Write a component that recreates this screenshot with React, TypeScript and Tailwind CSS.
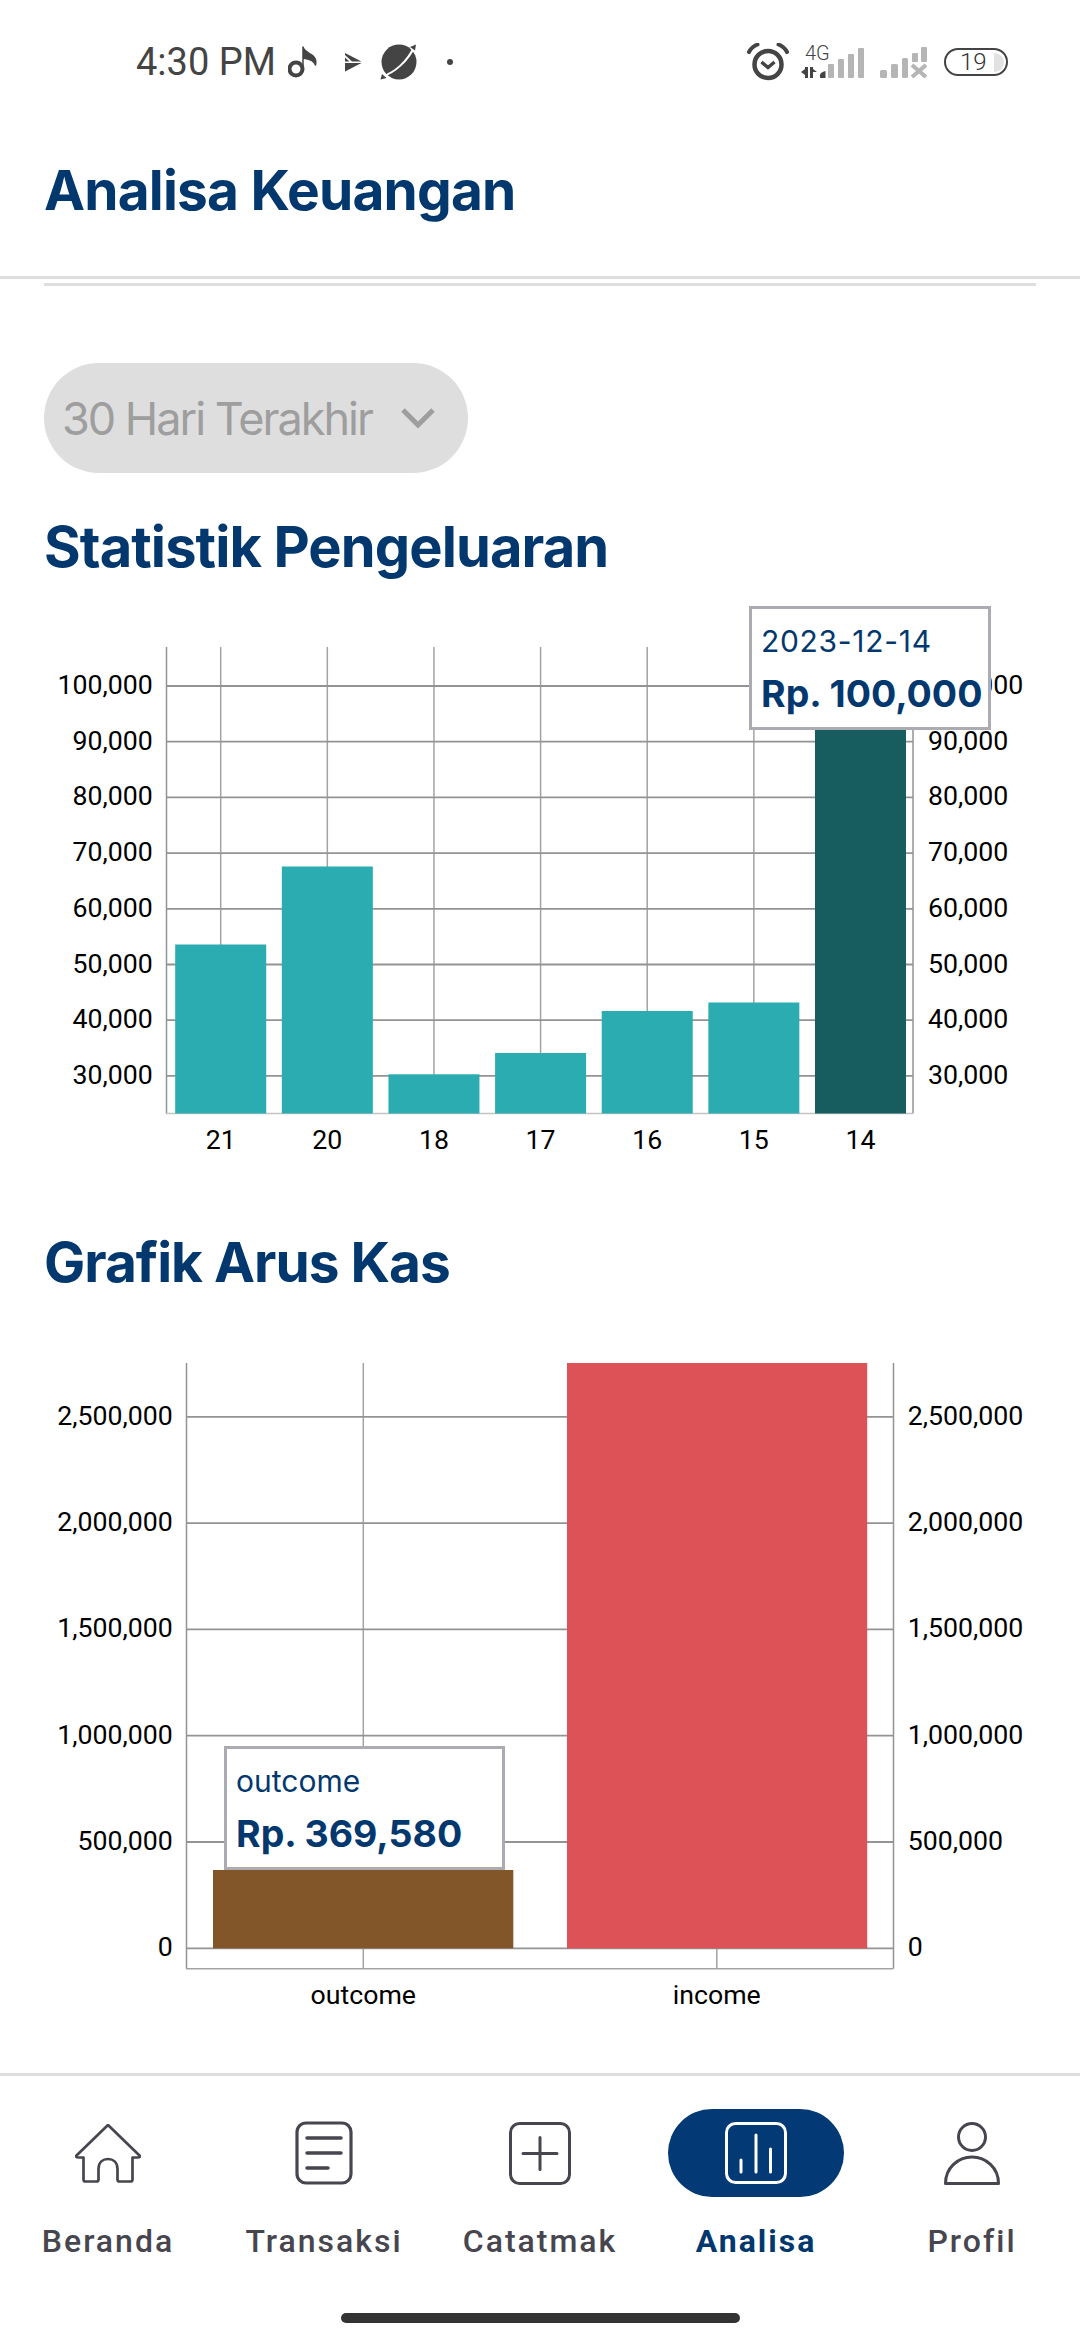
import React from "react";

const GRID = "#939393";

function MusicNote() {
  return (
    <svg width="30" height="33" viewBox="0 0 30 33" className="ml-[12px]">
      <circle cx="8" cy="23" r="6.500" fill="none" stroke="#444" strokeWidth="4" />
      <path d="M15 23 V1 C 16 5 20 6.500 23 8.500 C 27 11 28.500 14.500 27.500 19 C 26.500 15.500 22 13 15 12 Z" fill="#444" stroke="#444" strokeWidth="1.500" strokeLinejoin="round" />
    </svg>
  );
}

function PlayMark() {
  return (
    <svg width="18" height="20" viewBox="0 0 18 20" className="ml-[26px]">
      <path d="M1 1 L17.500 9.500 L8 9.500 L1 3 Z" fill="#444" />
      <path d="M1 5.500 L5.500 9.500 L1 9.500 Z" fill="#444" />
      <path d="M1 11 L8 11 L17.500 11 L1 19.500 Z" fill="#444" />
    </svg>
  );
}

function Planet() {
  return (
    <svg width="38" height="38" viewBox="0 0 38 38" className="ml-[18px]">
      <circle cx="19" cy="19" r="17.500" fill="#444" />
      <path d="M3 33 C 14 30, 28 18, 34 4" fill="none" stroke="#fff" strokeWidth="2" />
      <path d="M30 4 l6 -2.500 -1 6z M2 31 l-1.500 5.500 6 -1.500z" fill="#444" />
    </svg>
  );
}

function Alarm() {
  return (
    <svg width="42" height="38" viewBox="0 0 42 38">
      <circle cx="21" cy="21.500" r="13.500" fill="none" stroke="#444" strokeWidth="4.500" />
      <path d="M14.500 19 L21 24.500 L27.500 19" fill="none" stroke="#444" strokeWidth="3.500" />
      <path d="M2 9 C 4 5, 7 3, 10.500 1.500" fill="none" stroke="#444" strokeWidth="4" strokeLinecap="round" />
      <path d="M40 9 C 38 5, 35 3, 31.500 1.500" fill="none" stroke="#444" strokeWidth="4" strokeLinecap="round" />
    </svg>
  );
}

function Signal4G() {
  return (
    <svg width="68" height="34" viewBox="0 0 68 34" className="ml-[11px] overflow-visible">
      <text x="5" y="15" fontSize="20" fontWeight="300" fill="#444" className="font-['Roboto',sans-serif]">4G</text>
      <path d="M1 27 L5 24 V22 H8 V33 H5 V30Z M10 22 H13 V24 L17 27 L13 27 V33 H10Z" fill="#444" />
      <path d="M20 33 V30 C 20 28 22 27 25.500 26 V33Z" fill="#444" />
      <rect x="28" y="19" width="6" height="14" rx="1" fill="#b5b5b5" />
      <rect x="38" y="14" width="6" height="19" rx="1" fill="#b5b5b5" />
      <rect x="48" y="9" width="6" height="24" rx="1" fill="#b5b5b5" />
      <rect x="58" y="3" width="6" height="30" rx="1" fill="#b5b5b5" />
    </svg>
  );
}

function SignalX() {
  return (
    <svg width="50" height="32" viewBox="0 0 50 32" className="ml-[11px]">
      <rect x="1" y="24" width="7" height="8" rx="1.500" fill="#b5b5b5" />
      <rect x="12" y="18" width="7" height="14" rx="1.500" fill="#b5b5b5" />
      <rect x="23" y="12" width="6" height="20" rx="1.500" fill="#b5b5b5" />
      <rect x="33" y="7" width="6" height="9" rx="1" fill="#b5b5b5" />
      <rect x="42" y="1" width="6" height="15" rx="1" fill="#b5b5b5" />
      <path d="M33 19 L47 31 M47 19 L33 31" stroke="#b5b5b5" strokeWidth="4" />
    </svg>
  );
}

function Battery() {
  return (
    <div className="ml-[15px] flex h-[28px] w-[64px] items-center justify-between overflow-hidden rounded-full border-[2.500px] border-[#444] pl-[14px] pr-[2px]">
      <span className="font-['Roboto',sans-serif] text-[24px] leading-none font-light text-[#333]">19</span>
      <span className="h-[19px] w-[10px] rounded-r-full bg-[#e2e2e2]" />
    </div>
  );
}

function StatusBar() {
  return (
    <div className="flex h-[123px] items-start justify-between pt-[43px] pr-[72px] pl-[136px]">
      <div className="flex h-[38px] items-center">
        <span className="font-['Roboto',sans-serif] text-[38px] leading-none text-[#444]">4:30 PM</span>
        <MusicNote />
        <PlayMark />
        <Planet />
        <span className="ml-[29px] h-[6px] w-[6px] rounded-full bg-[#444]" />
      </div>
      <div className="flex h-[38px] items-center">
        <Alarm />
        <Signal4G />
        <SignalX />
        <Battery />
      </div>
    </div>
  );
}

function Chevron() {
  return (
    <svg width="36" height="22" viewBox="0 0 36 22">
      <path d="M3 3 L18 18 L33 3" fill="none" stroke="#9e9e9e" strokeWidth="5" />
    </svg>
  );
}

function Tooltip({ className, label, value, labelClass }: { className: string; label: string; value: string; labelClass?: string }) {
  return (
    <div className={`absolute h-[124px] border-[3px] border-[#abacb1] bg-white pt-[13px] pl-[9px] font-['Inter',sans-serif] ${className}`}>
      <div className={`text-[30px] leading-[38px] text-[#03386f] ${labelClass ?? ""}`}>{label}</div>
      <div className="mt-[12px] text-[37.500px] leading-[44px] font-bold whitespace-nowrap text-[#03386f]">{value}</div>
    </div>
  );
}

const tick = "font-['Roboto',sans-serif]";

function BarChart() {
  const bottom = 513.5;
  const ys = [100, 90, 80, 70, 60, 50, 40, 30];
  const labels = ["21", "20", "18", "17", "16", "15", "14"];
  const tops = [344.5, 266.5, 474.3, 453, 411, 402.5, 40];
  const cx = (i: number) => 220.7 + i * 106.63;
  return (
    <div className="relative mt-[13px] h-[570px] w-full">
      <svg width="1080" height="570" viewBox="0 0 1080 570" className="block">
        <line x1="166.500" x2="166.500" y1="47" y2={bottom} stroke={GRID} strokeWidth="1.500" />
        <line x1="913" x2="913" y1="47" y2={bottom} stroke={GRID} strokeWidth="1.500" />
        {labels.slice(0, 6).map((_, i) => (
          <line key={i} x1={cx(i)} x2={cx(i)} y1="47" y2={bottom} stroke="#a3a3a3" strokeWidth="1.500" />
        ))}
        {ys.map((v, i) => {
          const y = 86 + i * 55.7;
          return (
            <g key={v}>
              <line x1="166" x2="913" y1={y} y2={y} stroke={GRID} strokeWidth="1.800" />
              <text x="152.700" y={y + 8} textAnchor="end" fontSize="26.700" fill="#000" className={tick}>{v},000</text>
              <text x="928" y={y + 8} fontSize="26.700" fill="#000" className={tick}>{v},000</text>
            </g>
          );
        })}
        <line x1="166" x2="913" y1={bottom} y2={bottom} stroke="#c4c4c4" strokeWidth="1.500" />
        {labels.map((l, i) => (
          <g key={l}>
            <rect x={cx(i) - 45.500} y={tops[i]} width="91" height={bottom - tops[i]} fill={i === 6 ? "#175c5f" : "#2aacb0"} />
            <text x={cx(i)} y="548.500" textAnchor="middle" fontSize="26.700" fill="#000" className={tick}>{l}</text>
          </g>
        ))}
      </svg>
      <Tooltip className="top-[6px] left-[749px] w-[242px]" labelClass="tracking-[0.7px]" label="2023-12-14" value="Rp. 100,000" />
    </div>
  );
}

function CashChart() {
  const zero = 608.3;
  const top = 23;
  const ys = ["0", "500,000", "1,000,000", "1,500,000", "2,000,000", "2,500,000"];
  const bottom = 628.7;
  return (
    <div className="relative mt-[38px] h-[700px] w-full">
      <svg width="1080" height="700" viewBox="0 0 1080 700" className="block">
        <line x1="186.500" x2="186.500" y1={top} y2={bottom} stroke={GRID} strokeWidth="1.500" />
        <line x1="893.500" x2="893.500" y1={top} y2={bottom} stroke={GRID} strokeWidth="1.500" />
        <line x1="363.300" x2="363.300" y1={top} y2={bottom} stroke="#a3a3a3" strokeWidth="1.500" />
        <line x1="716.800" x2="716.800" y1={top} y2={bottom} stroke="#a3a3a3" strokeWidth="1.500" />
        {ys.map((v, i) => {
          const y = zero - i * 106.3;
          return (
            <g key={v}>
              <line x1="186" x2="893" y1={y} y2={y} stroke={GRID} strokeWidth="1.800" />
              <text x="172.700" y={y + 8} textAnchor="end" fontSize="26.700" fill="#000" className={tick}>{v}</text>
              <text x="907.700" y={y + 8} fontSize="26.700" fill="#000" className={tick}>{v}</text>
            </g>
          );
        })}
        <line x1="186" x2="893" y1={bottom} y2={bottom} stroke="#a3a3a3" strokeWidth="1.500" />
        <rect x="213" y="530" width="300.300" height={zero - 530} fill="#825628" />
        <rect x="567" y={top} width="300.200" height={zero - top} fill="#dd5256" />
        <text x="363.300" y="664.300" textAnchor="middle" fontSize="26.700" fill="#000" className={tick}>outcome</text>
        <text x="716.800" y="664.300" textAnchor="middle" fontSize="26.700" fill="#000" className={tick}>income</text>
      </svg>
      <Tooltip className="top-[406px] left-[224px] w-[281px]" label="outcome" value="Rp. 369,580" />
    </div>
  );
}

const navStroke = "#47464f";

function HomeIcon() {
  return (
    <svg width="66" height="59" viewBox="0 0 66 59">
      <path d="M33 1 L65 32 Q 65 33.500 62 33.500 H57.500 V55.500 Q57.500 57.500 55.500 57.500 H44.500 Q42.500 57.500 42.500 55.500 V45 C42.500 38 38 35 33 35 C28 35 23.500 38 23.500 45 V55.500 Q23.500 57.500 21.500 57.500 H10.500 Q8.500 57.500 8.500 55.500 V33.500 H4 Q1 33.500 1 32 Z" fill="none" stroke={navStroke} strokeWidth="2.700" strokeLinejoin="round" />
    </svg>
  );
}

function ListIcon() {
  return (
    <svg width="58" height="64" viewBox="0 0 58 64">
      <rect x="2" y="2" width="54" height="60" rx="9" fill="none" stroke={navStroke} strokeWidth="3.200" />
      <path d="M12 17 H46 M12 32 H46 M12 47 H33" stroke={navStroke} strokeWidth="3.500" strokeLinecap="round" fill="none" />
    </svg>
  );
}

function PlusIcon() {
  return (
    <svg width="62" height="63" viewBox="0 0 62 63">
      <rect x="1.500" y="1.500" width="59" height="60" rx="9" fill="none" stroke={navStroke} strokeWidth="3" />
      <path d="M31 15.500 V47.500 M14 31.500 H48" stroke={navStroke} strokeWidth="3" strokeLinecap="round" fill="none" />
    </svg>
  );
}

function StatsIcon() {
  return (
    <svg width="62" height="62" viewBox="0 0 62 62">
      <rect x="1.500" y="1.500" width="59" height="59" rx="9" fill="none" stroke="#fff" strokeWidth="3" />
      <path d="M16 38 V50 M31 13 V50 M45.500 27 V50" stroke="#fff" strokeWidth="3" strokeLinecap="round" fill="none" />
    </svg>
  );
}

function PersonIcon() {
  return (
    <svg width="56" height="63" viewBox="0 0 56 63">
      <circle cx="28" cy="15" r="13.500" fill="none" stroke={navStroke} strokeWidth="3" />
      <path d="M1.500 61.500 C 1.500 46 14 35 28 35 C 42 35 54.500 46 54.500 61.500 Z" fill="none" stroke={navStroke} strokeWidth="3" strokeLinejoin="round" />
    </svg>
  );
}

function NavItem({ label, active, children }: { label: string; active?: boolean; children: React.ReactNode }) {
  return (
    <div className="flex flex-col items-center">
      <div className={`flex h-[88px] w-[176px] items-center justify-center rounded-full ${active ? "bg-[#033a75]" : ""}`}>{children}</div>
      <span className={`mt-[25px] font-['Roboto',sans-serif] text-[32px] leading-[38px] tracking-[2px] ${active ? "font-bold text-[#03386f]" : "font-medium text-[#47464f]"}`}>
        {label}
      </span>
    </div>
  );
}

export default function App() {
  return (
    <div className="flex h-[2340px] w-[1080px] flex-col overflow-hidden bg-white">
      <StatusBar />
      <div className="flex h-[153px] items-start px-[44px]">
        <h1 className="mt-[31px] font-['Inter',sans-serif] text-[55px] leading-[72px] font-bold tracking-[-0.800px] text-[#03386f]">Analisa Keuangan</h1>
      </div>
      <div className="h-[3px] w-full bg-[#dedede]" />
      <div className="mx-[44px] mt-[4px] h-[3px] bg-[#dedede]" />
      <div className="mx-[44px] mt-[77px] flex h-[110px] w-[424px] items-center rounded-full bg-[#dedede] pr-[32px] pl-[18px]">
        <span className="font-['Inter',sans-serif] text-[45px] leading-none tracking-[-2px] text-[#9e9e9e]">30 Hari Terakhir</span>
        <span className="ml-auto flex"><Chevron /></span>
      </div>
      <h2 className="mx-[44px] mt-[34px] font-['Inter',sans-serif] text-[56px] leading-[80px] font-bold tracking-[-0.900px] text-[#03386f]">Statistik Pengeluaran</h2>
      <BarChart />
      <h2 className="mx-[44px] mt-[52px] font-['Inter',sans-serif] text-[55px] leading-[80px] font-bold tracking-[-1px] text-[#03386f]">Grafik Arus Kas</h2>
      <CashChart />
      <div className="mt-[33px] h-[3px] w-full bg-[#dedede]" />
      <div className="grid grid-cols-5 pt-[33px]">
        <NavItem label="Beranda"><HomeIcon /></NavItem>
        <NavItem label="Transaksi"><ListIcon /></NavItem>
        <NavItem label="Catatmak"><PlusIcon /></NavItem>
        <NavItem label="Analisa" active><StatsIcon /></NavItem>
        <NavItem label="Profil"><PersonIcon /></NavItem>
      </div>
      <div className="mx-auto mt-[53px] h-[10px] w-[399px] rounded-full bg-[#333]" />
    </div>
  );
}
